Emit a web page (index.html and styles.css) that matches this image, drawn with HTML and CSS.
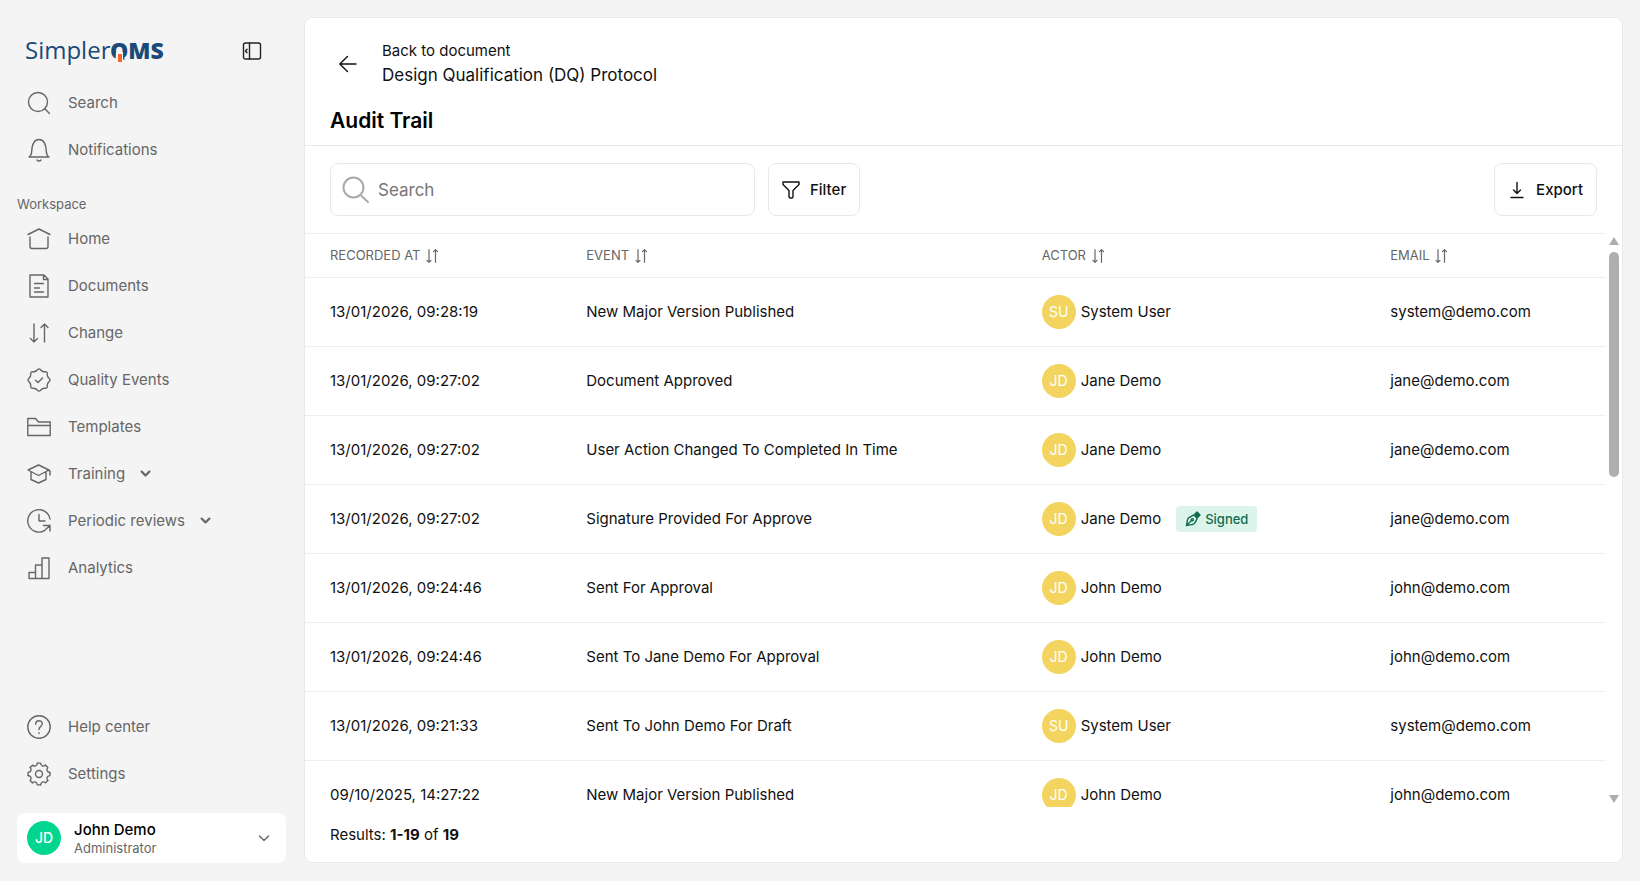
FILE: index.html
```
<!DOCTYPE html>
<html lang="en">
<head>
  <meta charset="UTF-8" />
  <meta name="viewport" content="width=device-width, initial-scale=1.0"/>
  <title>Audit Trail</title>
  <link rel="stylesheet" href="styles.css">
</head>
<body>
  <svg class="sprite" aria-hidden="true">
    <symbol id="sort" viewBox="0 0 14 14">
      <path d="M4 .7v12.600M2 11.300l2 2 2-2M10.500 13.300V.7M8.500 2.700l2-2 2 2"/>
    </symbol>
    <symbol id="caret" viewBox="0 0 10 10">
      <path d="m2 3.500 3 3 3-3"/>
    </symbol>
    <path id="tooth" d="M-1.600-10.900H1.600C2.100-7.900 4.100-7.100 6.600-8.800"/>
    <path id="lobe" d="M-3.600-8.700C-1.900-9-1.500-11.100 0-11.100S1.900-9 3.600-8.700"/>
  </svg>

  <div class="app">
    <aside class="sidebar">
      <div class="brand">
        <svg class="logo" viewBox="0 0 144 42" role="img" aria-label="SimplerQMS">
          <text class="logo-light" x="0" y="29">Simpler</text>
          <text class="logo-bold" x="85" y="29">QMS</text>
          <path class="logo-gap" d="M91 22h7v7.500h7V37H90z"/>
          <path class="logo-tick" d="M93 24h4v8h-4z"/>
        </svg>
        <button class="toggle" aria-label="Collapse sidebar">
          <svg class="icon" viewBox="0 0 20 20"><rect x="1.500" y="2" width="17" height="16" rx="2"/><path d="M7.500 2v16M5 8.200 3.500 10 5 11.800"/></svg>
        </button>
      </div>

      <nav class="menu">
        <a href="#"><svg class="icon" viewBox="0 0 24 24"><circle cx="11" cy="11" r="9.500"/><path d="m17.800 17.800 4.700 4.700"/></svg>Search</a>
        <a href="#"><svg class="icon" viewBox="0 0 24 24"><path d="M2 19h20c-1.700-1-2.500-2.500-2.700-5.500C19 7 17.500 1.500 12 1.500S5 7 4.700 13.500C4.500 16.500 3.700 18 2 19zM10 22c1 1.300 3 1.300 4 0"/></svg>Notifications</a>
      </nav>

      <h2 class="menu-title">Workspace</h2>
      <nav class="menu">
        <a href="#"><svg class="icon" viewBox="0 0 24 24"><path d="M1 7.500 12 2l11 5.500M3 10v9.500a2 2 0 0 0 2 2h14a2 2 0 0 0 2-2V10"/></svg>Home</a>
        <a href="#"><svg class="icon" viewBox="0 0 24 24"><path d="M3 1h14l4 4v18H3zM16.500 1v4.500H21M7.500 9.500h9M7.500 14h5M7.500 18h9"/></svg>Documents</a>
        <a href="#"><svg class="icon" viewBox="0 0 24 24"><path d="M7 3v18M3.500 17.500 7 21l3.500-3.500M17.500 21V3M14 6.500 17.500 3 21 6.500"/></svg>Change</a>
        <a href="#"><svg class="icon" viewBox="-12 -12 24 24"><use href="#lobe"/><use href="#lobe" transform="rotate(45)"/><use href="#lobe" transform="rotate(90)"/><use href="#lobe" transform="rotate(135)"/><use href="#lobe" transform="rotate(180)"/><use href="#lobe" transform="rotate(225)"/><use href="#lobe" transform="rotate(270)"/><use href="#lobe" transform="rotate(315)"/><path d="m-3.500.200 2.500 2.300 4.500-4.500"/></svg>Quality Events</a>
        <a href="#"><svg class="icon" viewBox="0 0 24 24"><path d="M.8 20.500v-17h7.700l3 3.500h11.700v13.500zM.8 10.500h22.400"/></svg>Templates</a>
        <a href="#"><svg class="icon" viewBox="0 0 24 24"><path d="M1 8 11.500 3 22 8l-10.500 5.500zM4 10v7.500l7.500 3.500 7.500-3.500V10M20 7.500l3 1.500v4"/></svg>Training<svg class="caret"><use href="#caret"/></svg></a>
        <a href="#"><svg class="icon" viewBox="0 0 24 24"><path d="M23 10A11.200 11.200 0 1 0 17.500 21.600M12 5.500V12h6M16.500 16.500h6.500V22M23 16.500l-6 5.500"/></svg>Periodic reviews<svg class="caret"><use href="#caret"/></svg></a>
        <a href="#"><svg class="icon" viewBox="0 0 24 24"><path d="M2 22.500v-6h6.500v6zM8.500 22.500V9H15v13.500zM15 22.500V2h7v20.500zM2 22.500h20"/></svg>Analytics</a>
      </nav>

      <nav class="menu menu-bottom">
        <a href="#"><svg class="icon" viewBox="0 0 24 24"><circle cx="12" cy="12" r="11.200"/><path d="M8.700 9.200c0-4.600 6.800-4.400 6.600-.4-.1 2.400-3.300 2.500-3.300 5.700M12 17.700v.8"/></svg>Help center</a>
        <a href="#"><svg class="icon" viewBox="-12 -12 24 24"><use href="#tooth"/><use href="#tooth" transform="rotate(45)"/><use href="#tooth" transform="rotate(90)"/><use href="#tooth" transform="rotate(135)"/><use href="#tooth" transform="rotate(180)"/><use href="#tooth" transform="rotate(225)"/><use href="#tooth" transform="rotate(270)"/><use href="#tooth" transform="rotate(315)"/><circle r="3.500"/></svg>Settings</a>
      </nav>

      <button class="user">
        <span class="avatar avatar-green">JD</span>
        <span class="user-info">
          <span class="user-name">John Demo</span>
          <span class="user-role">Administrator</span>
        </span>
        <svg class="icon chevron" viewBox="0 0 12 12"><path d="m1.500 4 4.500 4.500L10.500 4"/></svg>
      </button>
    </aside>

    <main class="panel">
      <header class="panel-header">
        <a class="back" href="#">
          <svg class="icon" viewBox="0 0 20 20"><path d="M18 10H2M9.500 2.500 1.800 10l7.700 7.500"/></svg>
          <span class="back-text">
            <span class="back-label">Back to document</span>
            <span class="back-doc">Design Qualification (DQ) Protocol</span>
          </span>
        </a>
        <h1>Audit Trail</h1>
      </header>

      <div class="toolbar">
        <label class="search">
          <svg class="icon" viewBox="0 0 28 28"><circle cx="11.500" cy="11.500" r="10"/><path d="m19.500 20 6.500 6"/></svg>
          <input type="search" placeholder="Search" aria-label="Search">
        </label>
        <button class="btn"><svg class="icon" viewBox="0 0 18 18"><path d="M1 1h16v2.500l-6 6V16l-1 1H8l-1-1V9.500l-6-6z"/></svg>Filter</button>
        <button class="btn btn-export"><svg class="icon" viewBox="0 0 18 18"><path d="M9 1.500v11M5.500 9 9 12.500 12.500 9M3 16.500h12"/></svg>Export</button>
      </div>

      <div class="table-area">
        <div class="table-scroll">
          <table>
            <thead>
              <tr>
                <th class="col-date">RECORDED AT <svg class="sort"><use href="#sort"/></svg></th>
                <th class="col-event">EVENT <svg class="sort"><use href="#sort"/></svg></th>
                <th class="col-actor">ACTOR <svg class="sort"><use href="#sort"/></svg></th>
                <th>EMAIL <svg class="sort"><use href="#sort"/></svg></th>
              </tr>
            </thead>
            <tbody>
              <tr>
                <td>13/01/2026, 09:28:19</td>
                <td>New Major Version Published</td>
                <td><div class="actor"><span class="avatar">SU</span>System User</div></td>
                <td>system@demo.com</td>
              </tr>
              <tr>
                <td>13/01/2026, 09:27:02</td>
                <td>Document Approved</td>
                <td><div class="actor"><span class="avatar">JD</span>Jane Demo</div></td>
                <td>jane@demo.com</td>
              </tr>
              <tr>
                <td>13/01/2026, 09:27:02</td>
                <td>User Action Changed To Completed In Time</td>
                <td><div class="actor"><span class="avatar">JD</span>Jane Demo</div></td>
                <td>jane@demo.com</td>
              </tr>
              <tr>
                <td>13/01/2026, 09:27:02</td>
                <td>Signature Provided For Approve</td>
                <td>
                  <div class="actor"><span class="avatar">JD</span>Jane Demo
                    <span class="signed"><svg class="icon" viewBox="0 0 16 16"><path d="M1.500 14.500C2 12 2.200 9 3.200 7.200 4.800 5.500 7 5 9 4l3.200 3.200c-1 2-1.500 4.200-3.200 5.600-2 1-5 1.200-7.500 1.700zM1.500 14.500l5-5"/><circle cx="7.300" cy="8.700" r="1.100"/><path class="nib" d="M9.800 3.200 12 1l3 3-2.200 2.200z"/></svg>Signed</span>
                  </div>
                </td>
                <td>jane@demo.com</td>
              </tr>
              <tr>
                <td>13/01/2026, 09:24:46</td>
                <td>Sent For Approval</td>
                <td><div class="actor"><span class="avatar">JD</span>John Demo</div></td>
                <td>john@demo.com</td>
              </tr>
              <tr>
                <td>13/01/2026, 09:24:46</td>
                <td>Sent To Jane Demo For Approval</td>
                <td><div class="actor"><span class="avatar">JD</span>John Demo</div></td>
                <td>john@demo.com</td>
              </tr>
              <tr>
                <td>13/01/2026, 09:21:33</td>
                <td>Sent To John Demo For Draft</td>
                <td><div class="actor"><span class="avatar">SU</span>System User</div></td>
                <td>system@demo.com</td>
              </tr>
              <tr>
                <td>09/10/2025, 14:27:22</td>
                <td>New Major Version Published</td>
                <td><div class="actor"><span class="avatar">JD</span>John Demo</div></td>
                <td>john@demo.com</td>
              </tr>
            </tbody>
          </table>
        </div>
        <div class="scrollbar" aria-hidden="true">
          <svg viewBox="0 0 10 8"><path d="M5 0 10 8H0z"/></svg>
          <div class="track"><div class="thumb"></div></div>
          <svg viewBox="0 0 10 8"><path d="M5 8 0 0h10z"/></svg>
        </div>
      </div>

      <footer class="results">Results: <b>1-19</b> of <b>19</b></footer>
    </main>
  </div>
</body>
</html>
```

FILE: styles.css
```
* {
  box-sizing: border-box;
}
body {
  margin: 0;
  background: #f4f4f4;
  color: #111;
  font-family: Inter, sans-serif;
  font-size: 15px;
  line-height: 20px;
}
a {
  color: inherit;
  text-decoration: none;
}
button {
  font: inherit;
  color: inherit;
  cursor: pointer;
}
.sprite {
  position: absolute;
  width: 0;
  height: 0;
}
.icon, .sort, .caret {
  fill: none;
  stroke: currentColor;
  stroke-width: 1.4;
  stroke-linecap: round;
  stroke-linejoin: round;
  flex-shrink: 0;
}
.app {
  display: flex;
  height: 100vh;
  padding: 17px 17px 18px 0;
}

/* Sidebar */
.sidebar {
  display: flex;
  flex-direction: column;
  width: 304px;
  flex-shrink: 0;
  padding: 0 18px 0 17px;
}
.brand {
  display: flex;
  align-items: center;
  justify-content: space-between;
  height: 62px;
  padding: 6px 24px 0 8px;
}
.logo {
  width: 144px;
  height: 42px;
  font-family: "Open Sans", sans-serif;
  fill: #1b4a78;
}
.logo-light {
  font-size: 24px;
}
.logo-bold {
  font-size: 23px;
  font-weight: 800;
}
.logo-gap {
  fill: #f4f4f4;
}
.logo-tick {
  fill: #f26a21;
}
.toggle {
  display: flex;
  padding: 0;
  border: none;
  background: none;
  color: #222;
}
.toggle .icon {
  width: 20px;
  height: 20px;
}
.menu a {
  display: flex;
  align-items: center;
  height: 47px;
  padding-left: 10px;
  color: #666;
}
.menu .icon {
  width: 24px;
  height: 24px;
  margin-right: 17px;
}
.caret {
  width: 13px;
  height: 13px;
  margin-left: 14px;
}
.menu .caret {
  stroke-width: 1.7;
}
.menu-title {
  margin: 21px 0 1px;
  font-size: 13px;
  font-weight: 400;
  color: #666;
}
.menu-bottom {
  margin-top: auto;
}
.user {
  display: flex;
  align-items: center;
  height: 50px;
  margin-top: 16px;
  padding: 0 16px 0 10px;
  border: none;
  border-radius: 8px;
  background: #fff;
  text-align: left;
}
.user-info {
  display: flex;
  flex-direction: column;
  flex: 1;
  margin-left: 13px;
}
.user-name {
  font-weight: 500;
  color: #000;
}
.user-role {
  font-size: 13px;
  line-height: 17px;
  color: #666;
}
.chevron {
  width: 12px;
  height: 12px;
  color: #666;
}
.avatar {
  display: flex;
  align-items: center;
  justify-content: center;
  width: 34px;
  height: 34px;
  border-radius: 50%;
  background: #f2d45f;
  color: #fff;
  font-size: 14px;
}
.avatar-green {
  background: #00d68f;
  font-weight: 500;
}

/* Main panel */
.panel {
  display: flex;
  flex-direction: column;
  flex: 1;
  min-width: 0;
  border: 1px solid #e9e9e9;
  border-radius: 8px;
  background: #fff;
}
.panel-header {
  padding: 22px 25px 10px;
  border-bottom: 1px solid #e9e9e9;
}
.back {
  display: flex;
  align-items: center;
  gap: 24px;
  padding-left: 8px;
}
.back .icon {
  width: 20px;
  height: 20px;
}
.back-text {
  display: flex;
  flex-direction: column;
}
.back-label {
  line-height: 22px;
}
.back-doc {
  font-size: 17px;
  line-height: 26px;
}
h1 {
  margin: 19px 0 0;
  font-size: 21px;
  font-weight: 600;
  line-height: 28px;
  color: #000;
}
.toolbar {
  display: flex;
  gap: 13px;
  padding: 17px 25px;
}
.search {
  display: flex;
  align-items: center;
  gap: 8px;
  width: 425px;
  height: 53px;
  padding: 0 11px;
  border: 1px solid #e9e9e9;
  border-radius: 8px;
}
.search .icon {
  width: 28px;
  height: 28px;
  color: #aaa;
  stroke-width: 2;
}
.search input {
  flex: 1;
  min-width: 0;
  padding: 0;
  border: none;
  outline: none;
  background: none;
  font: inherit;
  font-size: 17px;
}
.search input::placeholder {
  color: #757575;
}
.btn {
  display: flex;
  align-items: center;
  gap: 10px;
  padding: 0 13px;
  border: 1px solid #e9e9e9;
  border-radius: 8px;
  background: #fff;
  font-weight: 500;
}
.btn .icon {
  width: 18px;
  height: 18px;
}
.btn-export {
  margin-left: auto;
}

/* Table */
.table-area {
  display: flex;
  flex: 1;
  min-height: 0;
}
.table-scroll {
  flex: 1;
  overflow: hidden;
}
table {
  width: 100%;
  table-layout: fixed;
  border-collapse: collapse;
}
th, td {
  padding: 0 0 0 25px;
  border-bottom: 1px solid #efefef;
  text-align: left;
  white-space: nowrap;
}
th {
  height: 44px;
  padding-bottom: 2px;
  border-top: 1px solid #efefef;
  font-size: 13px;
  font-weight: 400;
  color: #666;
}
td {
  height: 69px;
}
.col-date {
  width: 19.7%;
}
.col-event {
  width: 35%;
}
.col-actor {
  width: 26.8%;
}
.sort {
  width: 14px;
  height: 14px;
  margin-left: 1px;
  vertical-align: middle;
  stroke-width: 1.2;
}
.actor {
  display: flex;
  align-items: center;
  gap: 5px;
}
.signed {
  display: flex;
  align-items: center;
  gap: 4px;
  height: 26px;
  margin-left: 10px;
  padding: 0 9px;
  border-radius: 4px;
  background: #dcf5ea;
  color: #0f6b50;
  font-size: 13px;
  font-weight: 500;
}
.signed .icon {
  width: 16px;
  height: 16px;
}
.nib {
  fill: currentColor;
}
.scrollbar {
  display: flex;
  flex-direction: column;
  align-items: center;
  gap: 7px;
  width: 16px;
  padding: 4px 0;
}
.scrollbar svg {
  width: 10px;
  height: 8px;
  fill: #aeaeae;
}
.track {
  flex: 1;
  width: 10px;
}
.thumb {
  height: 42%;
  border-radius: 5px;
  background: #aeaeae;
}
.results {
  padding: 18px 25px 17px;
}
```
